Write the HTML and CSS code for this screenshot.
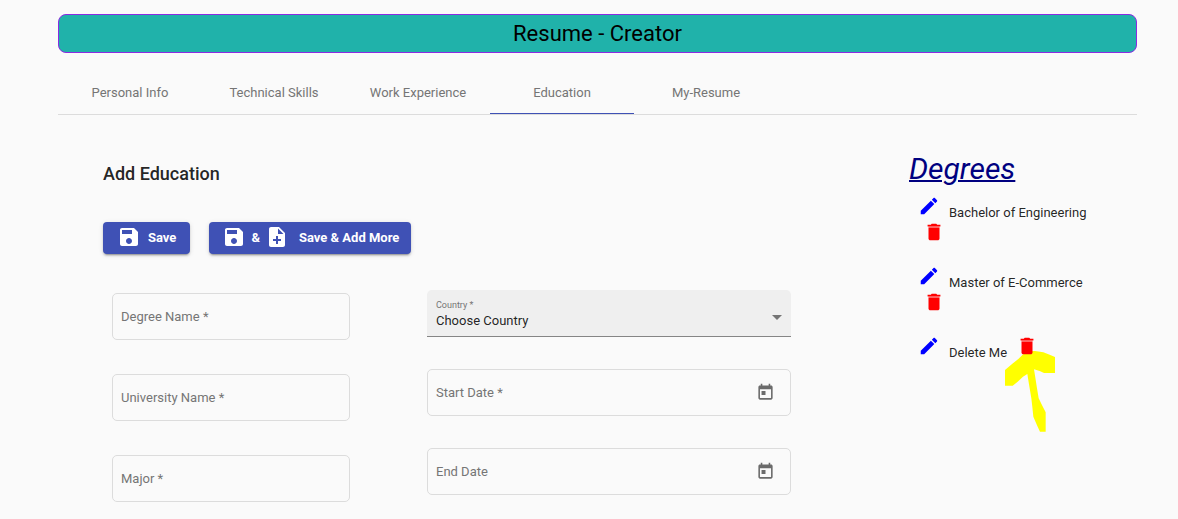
FILE: index.html
```html
<!DOCTYPE html>
<html lang="en">
<head>
<meta charset="utf-8">
<meta name="viewport" content="width=device-width, initial-scale=1">
<title>Resume - Creator</title>
<link rel="stylesheet" href="styles.css">
</head>
<body>
<svg class="sprite" aria-hidden="true">
  <symbol id="save" viewBox="0 0 24 24"><path d="M17 3H5c-1.11 0-2 .9-2 2v14c0 1.1.89 2 2 2h14c1.100 0 2-.9 2-2V7l-4-4zm-5 16c-1.660 0-3-1.340-3-3s1.340-3 3-3 3 1.340 3 3-1.340 3-3 3zm3-10H5V5h10v4z"/></symbol>
  <symbol id="note-add" viewBox="0 0 24 24"><path d="M14 2H6c-1.100 0-1.990.9-1.990 2L4 20c0 1.100.89 2 1.990 2H18c1.100 0 2-.9 2-2V8l-6-6zm2 14h-3v3h-2v-3H8v-2h3v-3h2v3h3v2zm-3-7V3.500L18.500 9H13z"/></symbol>
  <symbol id="edit" viewBox="0 0 24 24"><path d="M3 17.250V21h3.750L17.810 9.940l-3.750-3.750L3 17.250zM20.710 7.040c.39-.39.39-1.020 0-1.410l-2.340-2.340c-.39-.39-1.020-.39-1.410 0l-1.830 1.830 3.750 3.750 1.830-1.830z"/></symbol>
  <symbol id="delete" viewBox="0 0 24 24"><path d="M6 19c0 1.100.9 2 2 2h8c1.100 0 2-.9 2-2V7H6v12zM19 4h-3.500l-1-1h-5l-1 1H5v2h14V4z"/><path opacity=".5" d="M6 6h12v1H6z"/></symbol>
  <symbol id="today" viewBox="0 0 24 24"><path d="M19 3h-1V1h-2v2H8V1H6v2H5c-1.110 0-1.990.9-1.990 2L3 19c0 1.100.89 2 2 2h14c1.100 0 2-.9 2-2V5c0-1.100-.9-2-2-2zm0 16H5V8h14v11zM7 10h5v5H7z"/></symbol>
</svg>
<div class="page">
  <header class="banner"><h1>Resume - Creator</h1></header>
  <nav class="tabs">
    <button class="tab" type="button">Personal Info</button>
    <button class="tab" type="button">Technical Skills</button>
    <button class="tab" type="button">Work Experience</button>
    <button class="tab active" type="button">Education</button>
    <button class="tab" type="button">My-Resume</button>
  </nav>
  <main class="content">
    <form class="education">
      <h2>Add Education</h2>
      <div class="actions">
        <button class="btn" type="button"><svg class="icon"><use href="#save"/></svg><span>Save</span></button>
        <button class="btn btn-more" type="button"><svg class="icon"><use href="#save"/></svg><span>&amp;</span><svg class="icon"><use href="#note-add"/></svg><span class="btn-text">Save &amp; Add More</span></button>
      </div>
      <div class="fields">
        <div class="column column-text">
          <div class="field"><label for="degree">Degree Name *</label><input id="degree" type="text"></div>
          <div class="field"><label for="university">University Name *</label><input id="university" type="text"></div>
          <div class="field"><label for="major">Major *</label><input id="major" type="text"></div>
        </div>
        <div class="column column-dates">
          <div class="select-field">
            <label for="country">Country *</label>
            <select id="country"><option>Choose Country</option></select>
            <svg class="caret" viewBox="0 0 10 5" aria-hidden="true"><path d="M0 0h10L5 5z"/></svg>
          </div>
          <div class="field"><label for="start">Start Date *</label><input id="start" type="text"><button class="icon-btn calendar" type="button" aria-label="Open calendar"><svg><use href="#today"/></svg></button></div>
          <div class="field"><label for="end">End Date</label><input id="end" type="text"><button class="icon-btn calendar" type="button" aria-label="Open calendar"><svg><use href="#today"/></svg></button></div>
        </div>
      </div>
    </form>
    <aside class="degrees">
      <h2>Degrees</h2>
      <ul>
        <li><button class="icon-btn edit" type="button" aria-label="Edit"><svg><use href="#edit"/></svg></button><span class="name">Bachelor of Engineering</span><button class="icon-btn delete" type="button" aria-label="Delete"><svg><use href="#delete"/></svg></button></li>
        <li><button class="icon-btn edit" type="button" aria-label="Edit"><svg><use href="#edit"/></svg></button><span class="name">Master of E-Commerce</span><button class="icon-btn delete" type="button" aria-label="Delete"><svg><use href="#delete"/></svg></button></li>
        <li><svg class="arrow" viewBox="0 0 150 243" aria-hidden="true"><path d="M0 57L22 38 40 24 52 12 67 1 90 0 115 4 134 11 150 18V66H117L104 60 87 55 92 86 96 112 101 142 112 164 122 184V242H105L97 225 85 197 82 168 79 142 72 100 67 69 54 77 38 92 23 104H0z"/></svg><button class="icon-btn edit" type="button" aria-label="Edit"><svg><use href="#edit"/></svg></button><span class="name">Delete Me</span><button class="icon-btn delete" type="button" aria-label="Delete"><svg><use href="#delete"/></svg></button></li>
      </ul>
    </aside>
  </main>
</div>
</body>
</html>
```
FILE: styles.css
```css
* { box-sizing: border-box; }
body {
  margin: 0;
  background: #fafafa;
  color: rgba(0, 0, 0, .87);
  font: 13px/18px Roboto, sans-serif;
}
h1, h2, ul { margin: 0; padding: 0; font-weight: 400; }
button, input, select { font: inherit; color: inherit; border: 0; padding: 0; background: none; }
button { cursor: pointer; }
svg { display: block; fill: currentColor; }
.sprite { display: none; }

.page { padding: 14px 41px 0 58px; }
.banner {
  background: lightseagreen;
  border: 1px solid blueviolet;
  border-radius: 8px;
  color: #000;
  text-align: center;
}
.banner h1 { font-size: 22px; line-height: 37px; }

.tabs { display: flex; margin-top: 18px; border-bottom: 1px solid #dcdcdc; }
.tab {
  width: 144px;
  height: 43px;
  color: #757575;
  border-top: 1px solid transparent;
  border-bottom: 1px solid transparent;
}
.tab.active { border-bottom-color: #3f51b5; }

.content { display: flex; gap: 118px; padding: 36px 37px 0 45px; }
.education { flex: 1; padding-top: 11px; }
.education h2 { font-size: 18px; line-height: 24px; font-weight: 500; }

.actions { display: flex; gap: 19px; margin-top: 36px; }
.btn {
  display: flex;
  align-items: center;
  gap: 7px;
  height: 32px;
  padding: 0 14px;
  border-radius: 4px;
  background: #3f51b5;
  color: #fff;
  font-weight: 700;
  box-shadow: 0 3px 1px -2px rgba(0, 0, 0, .2), 0 2px 2px rgba(0, 0, 0, .14), 0 1px 5px rgba(0, 0, 0, .12);
}
.btn-more { gap: 5px; padding: 0 12px 0 13px; }
.btn-text { padding-left: 5px; }
.icon { width: 24px; height: 24px; margin-top: -2px; }

.fields {
  display: grid;
  grid-template-columns: 238fr 364fr;
  gap: 77px;
  margin-top: 36px;
  padding-left: 9px;
}
.column { display: flex; flex-direction: column; gap: 34px; }
.column-text { padding-top: 3px; }
.column-dates { gap: 32px; }
.field {
  display: grid;
  grid-template-columns: 1fr auto;
  align-items: center;
  height: 47px;
  border: 1px solid #dcdcdc;
  border-radius: 5px;
}
.field label { grid-area: 1 / 1; padding-left: 8px; color: #757575; }
.field input { grid-area: 1 / 1 / 2 / 2; width: 100%; height: 100%; padding: 0 8px; min-width: 0; }
.calendar { margin-right: 15px; color: #6b6b6b; }
.calendar svg { width: 19px; height: 19px; }

.select-field {
  display: grid;
  grid-template-columns: 1fr auto;
  align-items: center;
  height: 47px;
  background: #efefef;
  border-bottom: 1px solid #858585;
  border-radius: 5px 5px 0 0;
}
.select-field label {
  grid-area: 1 / 1;
  align-self: start;
  padding: 9px 0 0 9px;
  font-size: 9px;
  line-height: 12px;
  color: #757575;
}
.select-field select {
  grid-area: 1 / 1 / 2 / 3;
  appearance: none;
  width: 100%;
  height: 100%;
  padding: 16px 30px 0 9px;
}
.caret { grid-area: 1 / 2; width: 10px; height: 5px; margin: 8px 9px 0 0; color: #757575; pointer-events: none; }

.degrees { width: 191px; }
.degrees h2 {
  color: navy;
  font-size: 30px;
  line-height: 36px;
  font-style: italic;
  text-decoration: underline;
  text-decoration-thickness: 2px;
}
.degrees ul { list-style: none; margin-top: 8px; padding-left: 5px; }
.degrees li {
  position: relative;
  display: flex;
  flex-wrap: wrap;
  align-content: flex-start;
  align-items: flex-start;
  min-height: 70px;
}
.degrees svg { width: 22px; height: 22px; }
.name { padding-top: 9px; line-height: 17px; }
.edit { margin: 0 9px 0 4px; color: blue; }
.delete { position: relative; margin-left: 9px; color: red; }
.degrees .arrow { position: absolute; left: 91px; top: 16px; width: 50px; height: 81px; color: #ff0; }
```
